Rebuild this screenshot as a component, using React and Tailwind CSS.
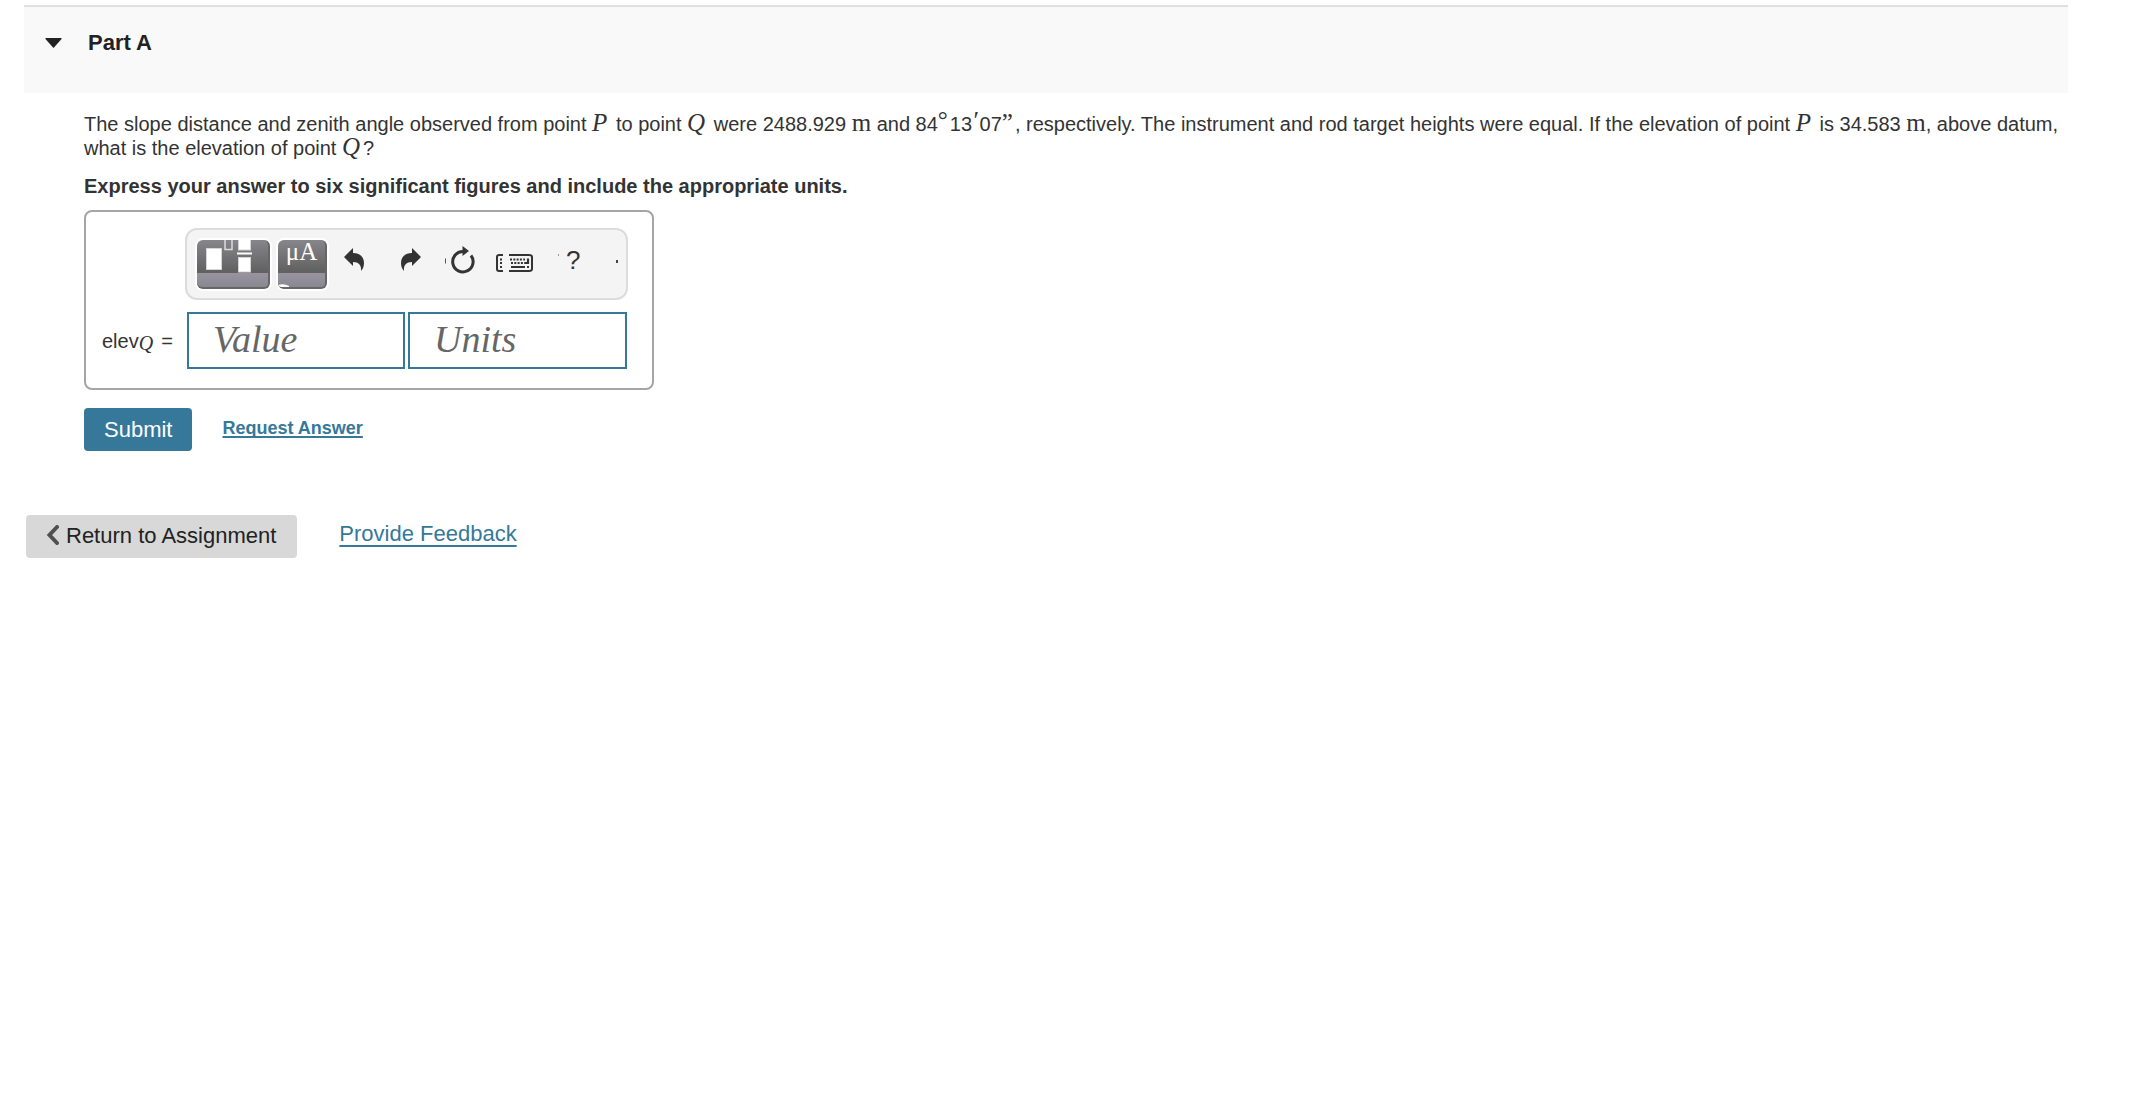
import React from "react";

const SANS = "font-['Liberation_Sans',Arial,sans-serif]";

function Var({ children }) {
  return (
    <span className="mr-[3px] font-['Liberation_Serif',serif] text-[25px] leading-4 italic">{children}</span>
  );
}

function Meter() {
  return <span className="font-['Liberation_Serif',serif] text-[25px] leading-4">m</span>;
}

function TemplatesButton() {
  return (
    <button
      type="button"
      aria-label="Templates"
      className="h-[49px] w-[73px] shrink-0 overflow-hidden rounded-md border-r-2 border-b-2 border-[#66666a] bg-linear-to-b from-[#87868b] from-0% via-[#626263] via-65% to-[#626263] ring-2 ring-white"
    >
      <svg viewBox="0 0 71 47" className="block h-[47px] w-[71px]">
        <defs>
          <linearGradient id="tray" x1="0" y1="0" x2="0" y2="1">
            <stop offset="0" stopColor="#9794a0" />
            <stop offset="1" stopColor="#89888f" />
          </linearGradient>
        </defs>
        <rect x="0" y="33" width="71" height="14" fill="url(#tray)" />
        <rect x="9.500" y="8.500" width="15" height="21" fill="#fff" stroke="#d4d4d4" />
        <path d="M28 0v9.500h7V0" fill="none" stroke="#dcdcdc" strokeWidth="1.500" />
        <rect x="41.500" y="-1" width="12" height="11" fill="#fff" stroke="#d4d4d4" />
        <rect x="40" y="12.500" width="15" height="2" fill="#fff" />
        <rect x="41.500" y="17.500" width="12" height="14.500" fill="#fff" stroke="#d4d4d4" />
      </svg>
    </button>
  );
}

function SymbolsButton() {
  return (
    <button
      type="button"
      aria-label="Symbols and units"
      className="flex h-[49px] w-[49px] shrink-0 flex-col rounded-md border-r-2 border-b-2 border-[#66666a] bg-linear-to-b from-[#87868b] from-0% via-[#626263] via-65% to-[#626263] ring-2 ring-white"
    >
      <span className="h-[33px] w-full text-center font-['Liberation_Serif',serif] text-[25px] leading-6 text-white">
        μA
      </span>
      <svg viewBox="0 0 47 14" className="block h-[14px] w-[47px] rounded-b">
        <rect width="47" height="14" fill="url(#tray)" />
        <path d="M0 12q6-2 11 1v1H0z" fill="#fff" />
      </svg>
    </button>
  );
}

function UndoIcon({ className }) {
  return (
    <svg viewBox="0 0 20 24" className={className} fill="#333">
      <path d="M0 9 9 0v5c7 0 11 4 11 10 0 3-1 6-3 8 .5-5-1.500-9-8-9v4z" />
    </svg>
  );
}

function ReloadIcon() {
  return (
    <svg viewBox="0 0 32 28" className="h-7 w-8">
      <path d="M.5 12.500v5" stroke="#555" strokeWidth="1" />
      <path d="M18 5.500A10.200 10.200 0 1 0 26 9.500" fill="none" stroke="#333" strokeWidth="3" />
      <path d="M17.500 0 24 5 17.500 10z" fill="#333" />
    </svg>
  );
}

function KeyboardIcon() {
  return (
    <svg viewBox="0 0 38 18" className="h-[18px] w-[38px]" fill="none" stroke="#333">
      <path d="M7 1H3Q1 1 1 3v12q0 2 2 2h4M13 1h20q3 0 3 2v12q0 2-3 2H13" strokeWidth="2" />
      <path d="M4 5.500h3M4 9h3M4 13h3M14 5.500h15M15 9h14" strokeWidth="2" strokeDasharray="2 1.300" />
      <path d="M15 13h14" strokeWidth="2" />
      <path d="M32 4.500V9H29" strokeWidth="2.200" />
      <path d="M31 13h2" strokeWidth="2" />
    </svg>
  );
}

function AnswerPanel() {
  return (
    <div className="mt-3 w-[570px] rounded-lg border-2 border-[#a5a5a5] pt-4 pr-6 pb-[19px] pl-4">
      <div className="ml-[83px] flex h-[72px] items-start rounded-xl border-2 border-[#dcdcdc] bg-[#f4f4f4] pt-[10px] pl-[10px]">
        <TemplatesButton />
        <span className="w-2 shrink-0" />
        <SymbolsButton />
        <button type="button" aria-label="Undo" className="mt-2 ml-[17px]">
          <UndoIcon className="h-6 w-5" />
        </button>
        <button type="button" aria-label="Redo" className="mt-2 ml-[37px]">
          <UndoIcon className="h-6 w-5 -scale-x-100" />
        </button>
        <button type="button" aria-label="Reset" className="mt-[6px] ml-6">
          <ReloadIcon />
        </button>
        <button type="button" aria-label="Keyboard shortcuts" className="mt-[14px] ml-[19px]">
          <KeyboardIcon />
        </button>
        <span className="mt-[14px] ml-6 h-[2px] w-px bg-[#999]" />
        <button type="button" aria-label="Help" className="mt-[6px] ml-[7px] text-[26px] leading-7 text-[#333]">
          ?
        </button>
        <span className="mt-5 ml-9 h-[3px] w-[2px] bg-[#444]" />
      </div>

      <div className="mt-3 flex items-center">
        <span className="w-[85px] shrink-0 text-xl text-[#333] whitespace-nowrap">
          elev<sub className="align-[-2px] bottom-0 text-xl leading-none font-['Liberation_Serif',serif] italic">Q</sub>
          <span className="ml-2">=</span>
        </span>
        <input
          aria-label="Value"
          placeholder="Value"
          className="h-[57px] w-[218px] border-2 border-[#36789a] px-6 pb-1 font-['Liberation_Serif',serif] text-[38px] italic placeholder:text-[#666] placeholder:opacity-100"
        />
        <input
          aria-label="Units"
          placeholder="Units"
          className="ml-[3px] h-[57px] w-[219px] border-2 border-[#36789a] px-6 pb-1 font-['Liberation_Serif',serif] text-[38px] italic placeholder:text-[#666] placeholder:opacity-100"
        />
      </div>
    </div>
  );
}

export default function App() {
  return (
    <main className={`${SANS} bg-white pt-[5px] pr-[69px] pl-6 text-xl text-[#333]`}>
      <header className="h-[88px] border-t-2 border-[#e0e0e0] bg-[#f9f9f9] pt-5 pl-[21px]">
        <button type="button" className="flex items-center text-[22px] leading-8 font-bold text-[#222]">
          <svg viewBox="0 0 17 10" className="h-[10px] w-[17px]" fill="#222">
            <path d="M1 0h15q1 0 .5 1L9 9.500q-.5.500-1 0L.5 1Q0 0 1 0z" />
          </svg>
          <span className="ml-[26px]">Part A</span>
        </button>
      </header>

      <section className="pt-[19px] pl-[60px]">
        <p className="leading-6">
          The slope distance and zenith angle observed from point <Var>P</Var> to point <Var>Q</Var> were 2488.929{" "}
          <Meter /> and 84
          <span className="mr-[2px] align-[3px] font-['Liberation_Serif',serif] text-[25px] leading-4">°</span>13
          <span className="mr-[2px] align-[2px] font-['Liberation_Serif',serif] text-[25px] leading-4 italic">′</span>07
          <span className="mr-[2px] font-['Liberation_Serif',serif] text-[25px] leading-4">”</span>, respectively. The
          instrument and rod target heights were equal. If the elevation of point <Var>P</Var> is 34.583 <Meter />,
          above datum, what is the elevation of point <Var>Q</Var>?
        </p>
        <p className="mt-[14px] leading-6 font-bold">
          Express your answer to six significant figures and include the appropriate units.
        </p>
        <AnswerPanel />
        <div className="mt-[18px] flex items-start">
          <button type="button" className="h-[43px] rounded bg-[#36789a] px-5 text-[22px] leading-10 text-white">
            Submit
          </button>
          <a
            href="#request"
            className="mt-[10px] ml-[30px] text-lg leading-5 font-bold text-[#36789a] underline decoration-2 underline-offset-2 [text-decoration-skip-ink:none]"
          >
            Request Answer
          </a>
        </div>
      </section>

      <footer className="mt-16 ml-[2px] flex items-start text-[22px]">
        <button type="button" className="flex h-[43px] items-center rounded bg-[#d8d8d8] pr-[21px] pl-5 text-[#222]">
          <svg viewBox="0 0 13 20" className="mr-[7px] mb-1 h-5 w-[13px]" fill="none" stroke="#505050" strokeWidth="4">
            <path d="M11 2 3.500 10 11 18" strokeLinecap="round" />
          </svg>
          Return to Assignment
        </button>
        <a
          href="#feedback"
          className="mt-[7px] ml-[42px] leading-6 text-[#36789a] underline decoration-2 underline-offset-4"
        >
          Provide Feedback
        </a>
      </footer>
    </main>
  );
}
